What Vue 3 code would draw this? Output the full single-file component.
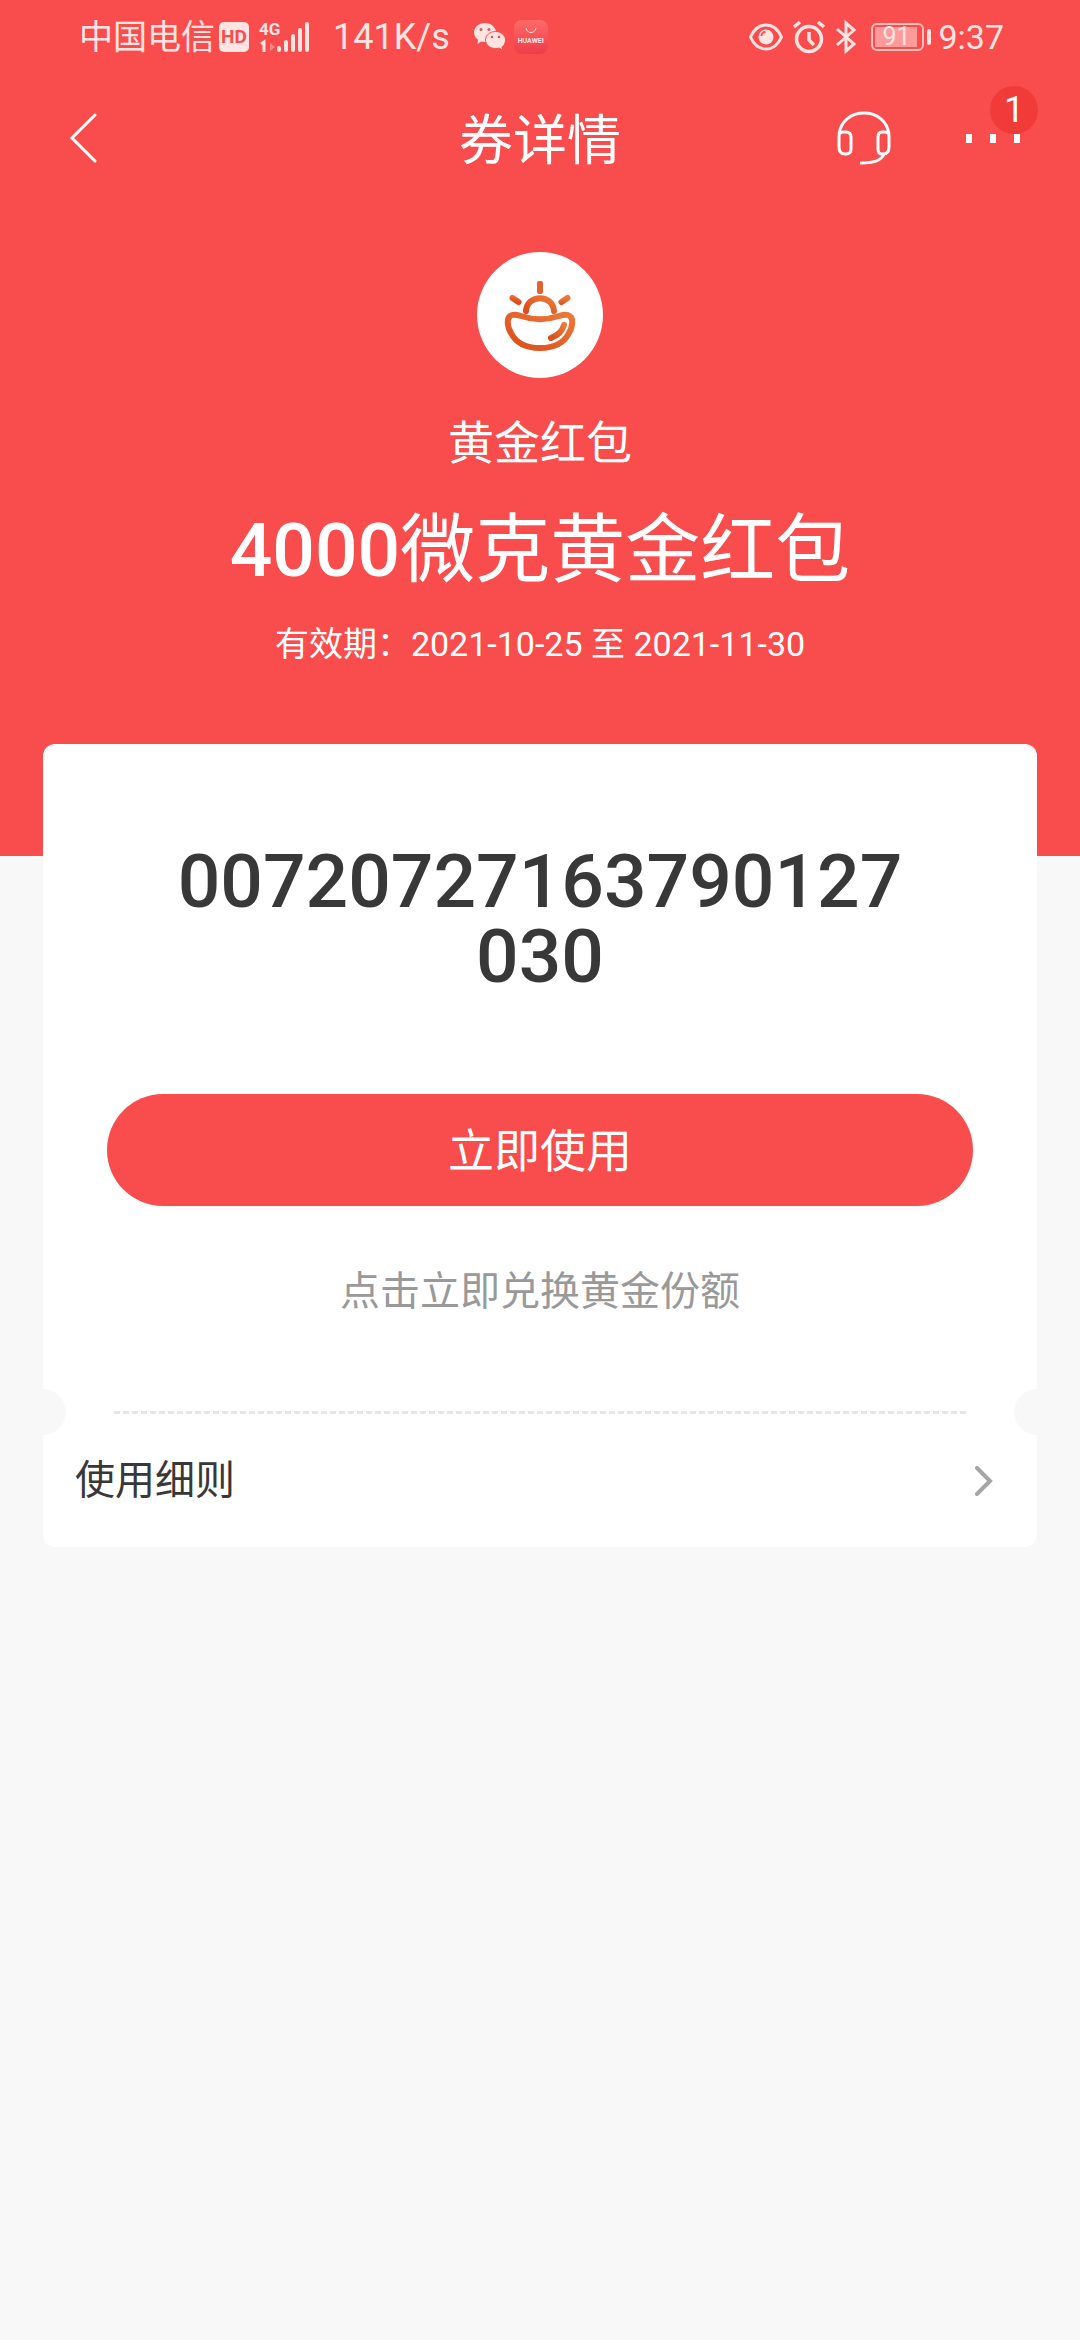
<template>
  <div class="coupon-page">
    <section class="hero">
      <div class="status-bar">
        <div class="status-left">
          <span class="carrier">中国电信</span>
          <span class="hd">HD</span>
          <svg class="signal" width="52" height="34" viewBox="0 0 52 34">
            <text x="0" y="15" class="network">4G</text>
            <path d="M2 24l3-2v10" fill="none" stroke="currentColor" stroke-width="3" />
            <path d="M11 23l5 4-5 4z" fill="currentColor" opacity="0.4" />
            <g stroke="currentColor" stroke-width="4" stroke-linecap="round">
              <path d="M20 28v2M27 22v8M34 16v14M41 10v20M48 4v26" />
            </g>
          </svg>
          <span class="speed">{{ speed }}</span>
          <svg class="wechat" width="32" height="28" viewBox="0 0 32 28">
            <path d="M11 0C5 0 0 4 0 9.500c0 3 1.500 5.500 4 7.300L3.500 21l4-2.500c1.200.3 2.300.5 3.500.5 6 0 11-4.200 11-9.500S17 0 11 0z" fill="currentColor" />
            <path d="M21.500 8.500c-5.500 0-10 3.700-10 8.500s4.500 8.500 10 8.500c1.200 0 2.400-.2 3.500-.5l4 2.500-1-3.500c2.200-1.600 3.500-4 3.500-7 0-4.800-4.500-8.500-10-8.500z" fill="currentColor" stroke="#f84d4c" />
            <g fill="#c9605c">
              <circle cx="7" cy="6.500" r="1.500" />
              <circle cx="15" cy="6.500" r="1.500" />
              <circle cx="18" cy="14" r="1.300" />
              <circle cx="25" cy="14" r="1.300" />
            </g>
          </svg>
          <span class="huawei">
            <svg width="12" height="6" viewBox="0 0 12 6">
              <path d="M1 0c1 6 9 6 10 0" fill="none" stroke="currentColor" />
            </svg>
            HUAWEI
          </span>
        </div>
        <div class="status-right">
          <svg width="34" height="28" viewBox="0 0 34 28">
            <path d="M1.500 14C5 6 11 2 17 2s12 4 15.500 12C29 22 23 26 17 26S5 22 1.500 14z" fill="none" stroke="currentColor" stroke-width="3" />
            <circle cx="17" cy="14" r="7.500" fill="currentColor" />
            <path d="M12.500 13a4 4 0 0 1 4-4" fill="none" stroke="#f84d4c" stroke-width="2" />
          </svg>
          <svg width="32" height="34" viewBox="0 0 32 34">
            <g fill="none" stroke="currentColor" stroke-width="3.500">
              <circle cx="16" cy="19" r="12.500" />
              <path d="M1 7l6-5M31 7l-6-5M16 12v8l5 5" />
            </g>
          </svg>
          <svg width="22" height="34" viewBox="0 0 22 34">
            <path d="M2 9l17 15-8 7V3l8 7L2 25" fill="none" stroke="currentColor" stroke-width="3" />
          </svg>
          <span class="battery"><span class="level">{{ battery }}</span></span>
          <span class="time">9:37</span>
        </div>
      </div>

      <header class="nav-bar">
        <button class="nav-btn back" aria-label="返回">
          <svg width="28" height="52" viewBox="0 0 28 52">
            <path d="M26 3L3 26l23 23" fill="none" stroke="currentColor" stroke-width="3" stroke-linecap="round" />
          </svg>
        </button>
        <h1>券详情</h1>
        <div class="nav-actions">
          <button class="nav-btn" aria-label="客服">
            <svg width="54" height="54" viewBox="0 0 54 54">
              <g fill="none" stroke="currentColor" stroke-width="3">
                <path d="M2 23C4 10 14 2 27 2s23 8 25 21" />
                <path d="M2 25q0-4 4-4h3q5 0 5 5v12q0 5-5 5H8q-6 0-6-7z" />
                <path d="M52 25q0-4-4-4h-3q-4 0-4 5v12q0 5 4 5h1q6 0 6-7z" />
                <path d="M47 43c-3 7-10 9-24 9" />
              </g>
            </svg>
          </button>
          <button class="nav-btn more" aria-label="更多">
            <span class="badge">{{ unread }}</span>
            <span class="dots"><i></i><i></i><i></i></span>
          </button>
        </div>
      </header>

      <div class="logo">
        <svg width="72" height="72" viewBox="0 0 72 72">
          <defs>
            <linearGradient id="gold" x1="0" y1="1" x2="1" y2="0">
              <stop offset="0" stop-color="#dc4c1c" />
              <stop offset="1" stop-color="#ec7938" />
            </linearGradient>
          </defs>
          <g fill="none" stroke="url(#gold)" stroke-width="6" stroke-linecap="round" stroke-linejoin="round">
            <path d="M8 34C2 36 3 45 7 52c5 10 15 15 29 15s24-5 29-15c4-7 5-16-1-18-3-1-6 0-9 1-12 4-26 4-38 0-3-1-6-2-9-1z" />
            <path d="M22 30c1-17 27-17 28 0" />
            <path d="M60 44c-2 7-6 10-13 13" />
            <path d="M8.500 17l6 4M63.500 17l-6 4" />
          </g>
          <rect x="33" y="0" width="6" height="13" rx="2" fill="#e4622b" />
        </svg>
      </div>
      <p class="brand">黄金红包</p>
      <h2 class="title"><span class="amount">4000</span>微克黄金红包</h2>
      <p class="valid">有效期：2021-10-25 至 2021-11-30</p>
    </section>

    <main class="card">
      <div class="card-main">
        <p class="code">{{ code }}</p>
        <button class="btn-use" @click="useCoupon">立即使用</button>
        <p class="hint">点击立即兑换黄金份额</p>
      </div>
      <div class="tear">
        <span class="notch left"></span>
        <span class="line"></span>
        <span class="notch right"></span>
      </div>
      <button class="rules">
        <span>使用细则</span>
        <svg width="18" height="30" viewBox="0 0 18 30">
          <path d="M2 2l13 13L2 28" fill="none" stroke="#a5a5a5" stroke-width="4" stroke-linecap="round" />
        </svg>
      </button>
    </main>
  </div>
</template>

<script setup>
import { ref } from 'vue'

const speed = ref('141K/s')
const battery = ref(91)
const unread = ref(1)

// Código del cupón
const code = ref('00720727163790127030')

const useCoupon = () => {
  console.log('立即使用:', code.value)
}
</script>

<style>
body {
  background: #f8f8f8;
}
</style>

<style scoped>
.coupon-page {
  min-height: 100vh;
  background: #f8f8f8;
  font-family: Roboto, "Noto Sans CJK SC", sans-serif;
  color: #383838;
}

h1, h2, p {
  margin: 0;
  font-weight: 400;
}

button {
  padding: 0;
  border: none;
  background: none;
  color: inherit;
  font-family: inherit;
  cursor: pointer;
}

svg {
  display: block;
  flex: none;
}

.hero {
  display: flex;
  flex-direction: column;
  align-items: center;
  padding-bottom: 188px;
  background: #f84d4c;
  color: #fff;
}

.status-bar {
  display: flex;
  justify-content: space-between;
  align-items: center;
  align-self: stretch;
  height: 74px;
  padding: 0 76px 0 79px;
  color: #ffe4e2;
}

.status-left, .status-right {
  display: flex;
  align-items: center;
}

.status-right {
  gap: 10px;
}

.carrier {
  font-size: 34px;
  line-height: 40px;
}

.hd {
  width: 30px;
  margin-left: 4px;
  border-radius: 5px;
  background: #ffe4e2;
  color: #f84d4c;
  font-size: 19px;
  font-weight: 700;
  line-height: 30px;
  text-align: center;
}

.signal {
  margin-left: 10px;
}

.network {
  fill: currentColor;
  font-size: 17px;
  font-weight: 700;
}

.speed {
  margin-left: 22px;
  font-size: 36px;
  line-height: 40px;
}

.wechat {
  margin-left: 24px;
}

.huawei {
  display: flex;
  flex-direction: column;
  align-items: center;
  gap: 2px;
  width: 34px;
  height: 34px;
  margin-left: 8px;
  padding-top: 8px;
  box-sizing: border-box;
  border-radius: 8px;
  background: linear-gradient(#ff6a68, #ee3c48);
  font-size: 7px;
  font-weight: 700;
  line-height: 10px;
}

.battery {
  position: relative;
  width: 53px;
  height: 28px;
  margin-left: 4px;
  margin-right: 4px;
  padding: 2px;
  box-sizing: border-box;
  border: 2px solid #ffc0bd;
  border-radius: 6px;
}

.battery::after {
  content: "";
  position: absolute;
  top: 4px;
  right: -9px;
  width: 4px;
  height: 16px;
  border-radius: 2px;
  background: #ffe4e2;
}

.level {
  display: block;
  width: 42px;
  background: #fc9b99;
  font-size: 25px;
  line-height: 20px;
  text-align: center;
}

.time {
  font-size: 34px;
  line-height: 40px;
}

.nav-bar {
  display: grid;
  grid-template-columns: 1fr auto 1fr;
  align-items: center;
  align-self: stretch;
  height: 128px;
  padding: 0 42px;
}

.nav-bar h1 {
  padding-top: 8px;
  font-size: 54px;
  line-height: 80px;
}

.nav-btn {
  display: flex;
}

.back {
  justify-self: start;
  padding-left: 27px;
}

.nav-actions {
  display: flex;
  justify-content: flex-end;
  align-items: center;
  gap: 75px;
}

.more {
  position: relative;
  justify-content: flex-start;
  width: 72px;
}

.dots {
  position: relative;
  display: flex;
  gap: 18px;
}

.dots i {
  width: 6px;
  height: 9px;
  background: #fff;
}

.badge {
  position: absolute;
  right: 0;
  bottom: 9px;
  width: 48px;
  border-radius: 50%;
  background: #f03b38;
  font-size: 36px;
  line-height: 48px;
  text-align: center;
}

.logo {
  display: flex;
  justify-content: center;
  align-items: center;
  width: 126px;
  height: 126px;
  margin-top: 50px;
  padding-top: 4px;
  box-sizing: border-box;
  border-radius: 50%;
  background: #fff;
}

.brand {
  margin-top: 35px;
  font-size: 46px;
  line-height: 60px;
}

.title {
  margin-top: 32px;
  font-size: 75px;
  line-height: 90px;
}

.amount {
  font-weight: 500;
}

.valid {
  margin-top: 25px;
  font-size: 34px;
  line-height: 48px;
}

.card {
  position: relative;
  margin: -112px 43px 0;
  border-radius: 12px;
  background: #fff;
}

.card-main {
  padding: 100px 64px 67px;
  text-align: center;
}

.code {
  padding: 0 64px;
  font-size: 75px;
  font-weight: 500;
  line-height: 75px;
  word-break: break-all;
}

.btn-use {
  width: 100%;
  height: 112px;
  margin: 100px 0 56px;
  padding-bottom: 6px;
  border-radius: 56px;
  background: #f84d4c;
  color: #fff;
  font-size: 46px;
}

.hint {
  color: #999;
  font-size: 40px;
  line-height: 60px;
}

.tear {
  display: flex;
  justify-content: space-between;
  align-items: center;
}

.notch {
  width: 23px;
  height: 46px;
  background: #f8f8f8;
}

.notch.left {
  border-radius: 0 23px 23px 0;
}

.notch.right {
  border-radius: 23px 0 0 23px;
}

.line {
  flex: 1;
  margin: 0 48px;
  border-top: 3px dashed #e6e6e6;
}

.rules {
  display: flex;
  justify-content: space-between;
  align-items: center;
  width: 100%;
  padding: 16px 44px 36px 32px;
  font-size: 40px;
  line-height: 60px;
}
</style>
